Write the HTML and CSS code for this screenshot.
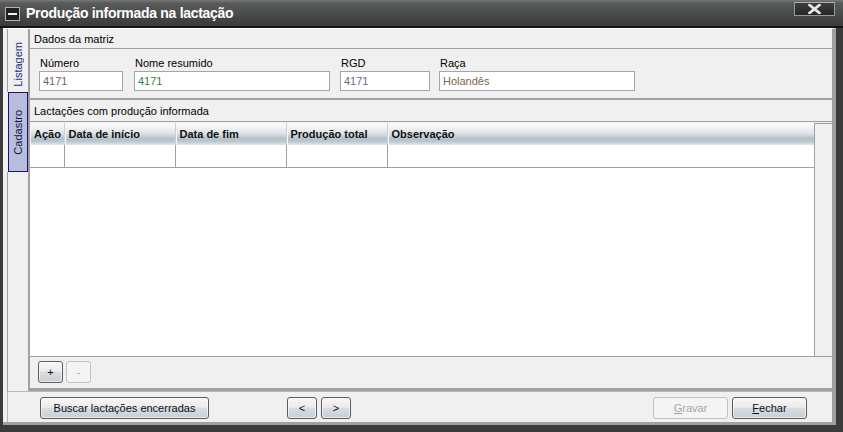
FILE: index.html
```html
<!DOCTYPE html>
<html lang="pt">
<head>
<meta charset="utf-8">
<title>Produção informada na lactação</title>
<link rel="stylesheet" href="styles.css">
</head>
<body>
<div class="window">
  <div class="titlebar">
    <span class="min-icon"><span class="min-dash"></span></span>
    <span class="title">Produção informada na lactação</span>
    <span class="close-btn">
      <svg width="13" height="10" viewBox="0 0 13 10"><path d="M1.5 1 L11.5 9 M11.5 1 L1.5 9" stroke="#e6e6e6" stroke-width="2.8" stroke-linecap="square" fill="none"/></svg>
    </span>
  </div>
  <div class="content">
    <div class="top">
      <div class="tabs">
        <div class="tab tab-list"><span class="tab-text">Listagem</span></div>
        <div class="tab tab-cad"><span class="tab-text">Cadastro</span></div>
      </div>
      <div class="panel">
        <div class="band">Dados da matriz</div>
        <div class="fields">
          <div class="field f-num">
            <div class="lbl">Número</div>
            <div class="inp c-num">4171</div>
          </div>
          <div class="field f-nome">
            <div class="lbl">Nome resumido</div>
            <div class="inp c-nome">4171</div>
          </div>
          <div class="field f-rgd">
            <div class="lbl">RGD</div>
            <div class="inp c-rgd">4171</div>
          </div>
          <div class="field f-raca">
            <div class="lbl">Raça</div>
            <div class="inp c-raca">Holandês</div>
          </div>
        </div>
        <div class="band band2">Lactações com produção informada</div>
        <div class="grid">
          <div class="table-wrap">
            <table class="tbl">
              <colgroup>
                <col class="w-acao"><col class="w-ini"><col class="w-fim"><col class="w-prod"><col class="w-obs">
              </colgroup>
              <thead>
                <tr><th>Ação</th><th>Data de início</th><th>Data de fim</th><th>Produção total</th><th>Observação</th></tr>
              </thead>
              <tbody>
                <tr><td></td><td></td><td></td><td></td><td></td></tr>
              </tbody>
            </table>
          </div>
          <div class="vscroll"></div>
        </div>
        <div class="actions">
          <button class="btn btn-sq">+</button>
          <button class="btn btn-sq" disabled>-</button>
        </div>
      </div>
    </div>
    <div class="bottombar">
      <button class="btn btn-buscar">Buscar lactações encerradas</button>
      <div class="nav">
        <button class="btn btn-nav">&lt;</button>
        <button class="btn btn-nav">&gt;</button>
      </div>
      <div class="right">
        <button class="btn btn-act" disabled><u>G</u>ravar</button>
        <button class="btn btn-act"><u>F</u>echar</button>
      </div>
    </div>
  </div>
</div>
</body>
</html>
```

FILE: styles.css
```css
* { box-sizing: border-box; }

body {
  margin: 0;
  background: #383a3a;
  font-family: "Liberation Sans", Arial, sans-serif;
  font-size: 11px;
  color: #000;
}

.window {
  width: 843px;
  height: 432px;
  background: #3a3c3c;
  display: flex;
  flex-direction: column;
  overflow: hidden;
}

/* Title bar */
.titlebar {
  height: 28px;
  flex: none;
  display: flex;
  align-items: flex-start;
  background: linear-gradient(to bottom, #777979 0px, #5a5c5c 3px, #4d4f4f 12px, #414343 20px, #3b3d3d 26px);
  border-bottom: 2px solid #141414;
}

.min-icon {
  width: 15px;
  height: 14px;
  margin: 7px 0 0 5px;
  border: 1px solid #b4b4b4;
  background: #202222;
  display: flex;
  align-items: center;
  justify-content: center;
}

.min-dash {
  width: 9px;
  height: 2px;
  background: #f2f2f2;
}

.title {
  margin: 5px 0 0 6px;
  color: #fff;
  font-weight: bold;
  font-size: 14px;
  letter-spacing: -0.3px;
  line-height: 16px;
}

.close-btn {
  margin: 2px 8px 0 auto;
  width: 41px;
  height: 14px;
  border: 1px solid #9a9c9c;
  border-top-color: #b0b2b2;
  background: linear-gradient(to bottom, #3c3e3e, #262828);
  display: flex;
  align-items: center;
  justify-content: center;
}

/* Content */
.content {
  margin: 0 7px 0 3px;
  height: 397px;
  flex: none;
  background: #f0f0f0;
  border-top: 1px solid #fff;
  border-right: 4px solid #a0a0a0;
  border-bottom: 3px solid #a0a0a0;
  display: flex;
  flex-direction: column;
}

.top {
  height: 362px;
  display: flex;
}

.tabs {
  width: 25px;
  padding-left: 4px;
  display: flex;
  flex-direction: column;
}

.tab {
  display: flex;
  align-items: center;
  justify-content: center;
}

.tab-list {
  height: 63px;
  padding-top: 8px;
  border-left: 1px solid #a0a0a0;
  color: #1e2d7a;
}

.tab-cad {
  height: 80px;
  border: 1px solid #15156e;
  background: #b7bddb;
  margin-left: 1px;
  color: #101850;
}

.tabs::after {
  content: "";
  flex: 1;
  border-left: 1px solid #a0a0a0;
}

.tab-text {
  writing-mode: vertical-rl;
  transform: rotate(180deg);
  line-height: 13px;
}

.panel {
  flex: 1;
  border-left: 2px solid #a0a0a0;
  border-bottom: 3px solid #a0a0a0;
  display: flex;
  flex-direction: column;
}

.band {
  height: 20px;
  flex: none;
  border-bottom: 1px solid #a0a0a0;
  padding-left: 4px;
  display: flex;
  align-items: center;
}

.band2 {
  height: 22px;
}

.fields {
  height: 51px;
  flex: none;
  border-bottom: 2px solid #a0a0a0;
  padding: 8px 0 0 9px;
  display: flex;
}

.field { display: flex; flex-direction: column; }
.f-num { width: 84px; }
.f-nome { width: 196px; margin-left: 11px; }
.f-rgd { width: 90px; margin-left: 10px; }
.f-raca { width: 196px; margin-left: 9px; }

.lbl {
  line-height: 13px;
  height: 13px;
  padding-left: 1px;
}

.inp {
  margin-top: 1px;
  height: 20px;
  border: 1px solid #a6a6a6;
  background: #fff;
  padding-left: 3px;
  line-height: 18px;
}

.c-num { color: #7a5a6c; }
.c-nome { color: #3b7a3b; }
.c-rgd { color: #6a6888; }
.c-raca { color: #7a6848; }

/* Grid */
.grid {
  height: 235px;
  flex: none;
  border-bottom: 1px solid #a0a0a0;
  display: flex;
}

.table-wrap {
  width: 784px;
  margin-top: 1px;
  background: #fff;
}

.vscroll {
  flex: 1;
  margin-top: 1px;
  border-top: 1px solid #a0a0a0;
  border-left: 1px solid #a0a0a0;
  background: #f0f0f0;
}

.tbl {
  border-collapse: collapse;
  table-layout: fixed;
  width: 784px;
}

.w-acao { width: 34px; }
.w-ini { width: 111px; }
.w-fim { width: 111px; }
.w-prod { width: 101px; }
.w-obs { width: 427px; }

.tbl th {
  height: 22px;
  padding: 0 0 0 4px;
  text-align: left;
  font-weight: bold;
  color: #111;
  background: linear-gradient(to bottom, #fafbfc 0%, #eef1f3 25%, #d9dfe3 50%, #b5c0c8 72%, #bcc6cd 84%, #e2e7ea 100%);
  border-right: 1px solid #c9d0d5;
  box-shadow: inset 1px 0 0 #f4f6f7;
  white-space: nowrap;
  overflow: hidden;
}

.tbl th:last-child {
  border-right: 1px solid #a0a0a0;
}

.tbl td {
  height: 22px;
  border-right: 1px solid #a0a0a0;
  border-bottom: 1px solid #a0a0a0;
  padding: 0;
}

.actions {
  flex: 1;
  padding: 4px 0 0 8px;
  display: flex;
  align-items: flex-start;
  gap: 3px;
}

/* Buttons */
.btn {
  font-family: "Liberation Sans", Arial, sans-serif;
  font-size: 11px;
  color: #0c0c1c;
  height: 22px;
  padding: 0;
  border: 1px solid #5c5c5c;
  border-radius: 3px;
  background: linear-gradient(to bottom, #f7f7f7 0%, #ececec 45%, #d9dde0 52%, #c7cfd5 100%);
  box-shadow: inset 0 0 0 1px rgba(255,255,255,0.6);
  line-height: 18px;
}

.btn:disabled {
  color: #a4a4a4;
  border-color: #c2c2c2;
  background: #f4f4f4;
  box-shadow: none;
}

.btn-sq { width: 25px; }

.bottombar {
  height: 31px;
  margin-left: 4px;
  border-top: 1px solid #b8b8b8;
  border-left: 1px solid #b8b8b8;
  padding: 5px 25px 0 32px;
  display: flex;
  align-items: flex-start;
}

.btn-buscar { width: 169px; }

.nav {
  margin-left: 78px;
  display: flex;
  gap: 4px;
}

.btn-nav { width: 30px; }

.right {
  margin-left: auto;
  display: flex;
  gap: 4px;
}

.btn-act { width: 75px; }
```
